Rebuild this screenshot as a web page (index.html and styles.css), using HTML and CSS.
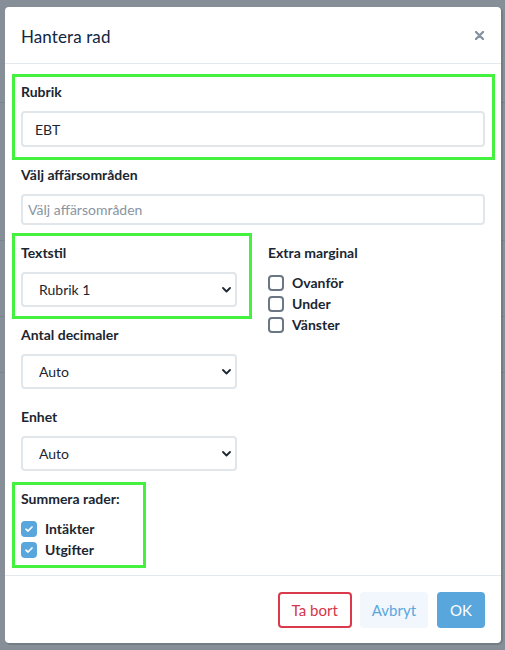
FILE: index.html
```html
<!DOCTYPE html>
<html lang="sv">

<head>
    <meta charset="UTF-8">
    <meta name="viewport" content="width=device-width, initial-scale=1.0">
    <title>Hantera rad</title>
    <link rel="stylesheet" href="styles.css">
</head>

<body>
    <div class="sida">
        <div class="sida-linje linje-1"></div>
        <div class="sida-linje linje-2"></div>
        <div class="sida-linje linje-3"></div>
        <div class="sida-linje linje-4"></div>
        <p class="sida-period">r: 21-01-01 – 21-12-31</p>
    </div>

    <div class="modal">
        <div class="modal-huvud">
            <h2>Hantera rad</h2>
            <button type="button" class="stang" aria-label="Stäng">
                <svg width="9" height="9" viewBox="0 0 9 9">
                    <path d="M1 1 L8 8 M8 1 L1 8" stroke="#8593a0" stroke-width="2.4" stroke-linecap="round" />
                </svg>
            </button>
        </div>

        <form class="modal-innehall">
            <div class="falt markerad markerad-rubrik">
                <label for="rubrik">Rubrik</label>
                <input type="text" id="rubrik" class="kontroll" value="EBT">
            </div>

            <div class="falt">
                <label for="omraden">Välj affärsområden</label>
                <input type="text" id="omraden" class="kontroll kontroll-liten" placeholder="Välj affärsområden">
            </div>

            <div class="kolumner">
                <div>
                    <div class="falt markerad markerad-stil">
                        <label for="textstil">Textstil</label>
                        <div class="valj">
                            <select id="textstil" class="kontroll kontroll-valj">
                                <option>Rubrik 1</option>
                                <option>Rubrik 2</option>
                                <option>Normal</option>
                            </select>
                            <svg class="pil" width="9" height="6" viewBox="0 0 9 6">
                                <path d="M1 1 L4.5 4.5 L8 1" fill="none" stroke="#1d2834" stroke-width="1.8" stroke-linecap="round" stroke-linejoin="round" />
                            </svg>
                        </div>
                    </div>

                    <div class="falt">
                        <label for="decimaler">Antal decimaler</label>
                        <div class="valj">
                            <select id="decimaler" class="kontroll kontroll-valj">
                                <option>Auto</option>
                                <option>0</option>
                                <option>1</option>
                                <option>2</option>
                            </select>
                            <svg class="pil" width="9" height="6" viewBox="0 0 9 6">
                                <path d="M1 1 L4.5 4.5 L8 1" fill="none" stroke="#1d2834" stroke-width="1.8" stroke-linecap="round" stroke-linejoin="round" />
                            </svg>
                        </div>
                    </div>

                    <div class="falt">
                        <label for="enhet">Enhet</label>
                        <div class="valj">
                            <select id="enhet" class="kontroll kontroll-valj">
                                <option>Auto</option>
                                <option>kr</option>
                                <option>tkr</option>
                            </select>
                            <svg class="pil" width="9" height="6" viewBox="0 0 9 6">
                                <path d="M1 1 L4.5 4.5 L8 1" fill="none" stroke="#1d2834" stroke-width="1.8" stroke-linecap="round" stroke-linejoin="round" />
                            </svg>
                        </div>
                    </div>

                    <div class="falt markerad markerad-summa">
                        <label>Summera rader:</label>
                        <div class="rutor">
                            <label class="ruta"><span class="box box-ikryssad">
                                <svg width="10" height="8" viewBox="0 0 10 8">
                                    <path d="M2 4.2 L4 6 L8 2" fill="none" stroke="#ffffff" stroke-width="1.7" stroke-linecap="round" stroke-linejoin="round" />
                                </svg></span>Intäkter</label>
                            <label class="ruta"><span class="box box-ikryssad">
                                <svg width="10" height="8" viewBox="0 0 10 8">
                                    <path d="M2 4.2 L4 6 L8 2" fill="none" stroke="#ffffff" stroke-width="1.7" stroke-linecap="round" stroke-linejoin="round" />
                                </svg></span>Utgifter</label>
                        </div>
                    </div>
                </div>

                <div>
                    <div class="falt">
                        <label>Extra marginal</label>
                        <div class="rutor">
                            <label class="ruta"><span class="box"></span>Ovanför</label>
                            <label class="ruta"><span class="box"></span>Under</label>
                            <label class="ruta"><span class="box"></span>Vänster</label>
                        </div>
                    </div>
                </div>
            </div>
        </form>

        <div class="modal-fot">
            <button type="button" class="knapp knapp-ta-bort">Ta bort</button>
            <button type="button" class="knapp knapp-avbryt">Avbryt</button>
            <button type="submit" class="knapp knapp-ok">OK</button>
        </div>
    </div>
</body>

</html>
```

FILE: styles.css
```css
body {
    font-family: Lato, "Noto Sans", sans-serif;
    margin: 0;
    padding: 0;
    background-color: #868f97;
    color: #1b2631;
    height: 650px;
    overflow: hidden;
    position: relative;
}

/* sidan bakom dialogen */
.sida {
    height: 650px;
    position: relative;
}

.sida-linje {
    height: 1px;
    background-color: #7a848c;
}

.linje-1 {
    margin-top: 102px;
}

.linje-2 {
    margin-top: 137px;
}

.linje-3 {
    margin-top: 75px;
}

.linje-4 {
    margin-top: 55px;
}

.sida-period {
    position: absolute;
    left: 0;
    top: 641px;
    margin: 0;
    font-size: 14px;
    line-height: 16px;
    color: #333b42;
}

/* dialogen */
.modal {
    position: absolute;
    top: 7px;
    left: 5px;
    width: 496px;
    height: 636px;
    background-color: #ffffff;
    border-radius: 4px;
    box-shadow: 1px 1px 0 1px rgba(0, 0, 0, 0.12);
    display: flex;
    flex-direction: column;
}

.modal-huvud {
    height: 56px;
    display: flex;
    align-items: center;
    justify-content: space-between;
    padding: 0 17px 0 16px;
    border-bottom: 1px solid #e3e8ec;
}

.modal-huvud h2 {
    margin: 0;
    font-size: 17px;
    font-weight: normal;
    color: #12263f;
    padding-top: 2px;
    letter-spacing: 0.1px;
}

.stang {
    background: none;
    border: none;
    padding: 0;
    width: 9px;
    height: 9px;
    display: flex;
    cursor: pointer;
}

.modal-innehall {
    flex: 1;
    padding: 19px 16px 0 16px;
}

.falt {
    position: relative;
    margin-bottom: 19px;
}

.falt > label {
    display: block;
    font-size: 14px;
    line-height: 18px;
    font-weight: bold;
    margin-bottom: 10px;
    padding-top: 1px;
    margin-top: -1px;
}

.kolumner {
    display: grid;
    grid-template-columns: 216px 1fr;
    gap: 31px;
}

.kolumner .falt:last-child {
    margin-bottom: 0;
}

/* gröna markeringar ovanpå fälten */
.markerad::before {
    content: "";
    position: absolute;
    border: 3px solid #43f13e;
    box-sizing: border-box;
    pointer-events: none;
}

.markerad-rubrik::before {
    top: -8px;
    right: -10px;
    bottom: -13px;
    left: -9px;
}

.markerad-stil::before {
    top: -10px;
    right: -15px;
    bottom: -12px;
    left: -9px;
}

.markerad-summa::before {
    top: -7px;
    bottom: -8px;
    left: -9px;
    width: 134px;
}

.kontroll {
    display: block;
    width: 100%;
    height: 36px;
    border: 2px solid #e1e6ea;
    border-radius: 4px;
    box-sizing: border-box;
    font-family: inherit;
    font-size: 14px;
    color: #1b2631;
    padding: 0 12px;
    background-color: #ffffff;
    outline: none;
}

.kontroll-liten {
    height: 31px;
    padding: 0 5px;
}

.kontroll-liten::placeholder {
    color: #8995a1;
}

.valj {
    position: relative;
}

.kontroll-valj {
    height: 35px;
    padding: 0 16px;
    appearance: none;
    -webkit-appearance: none;
}

.pil {
    position: absolute;
    right: 6px;
    top: 15px;
    pointer-events: none;
}

.rutor {
    display: flex;
    flex-direction: column;
}

.ruta {
    display: flex;
    align-items: center;
    height: 21px;
    font-size: 14px;
    font-weight: bold;
}

.box {
    width: 16px;
    height: 16px;
    border: 2px solid #6b7684;
    border-radius: 4px;
    box-sizing: border-box;
    margin-right: 8px;
    display: flex;
    align-items: center;
    justify-content: center;
}

.box-ikryssad {
    border: none;
    background-color: #58a6dc;
}

.modal-fot {
    border-top: 1px solid #e3e8ec;
    display: flex;
    justify-content: flex-end;
    gap: 8px;
    padding: 16px 16px 15px;
}

.knapp {
    height: 36px;
    padding: 0 13px;
    border: none;
    border-radius: 4px;
    font-family: inherit;
    font-size: 15px;
    cursor: pointer;
}

.knapp-ta-bort {
    background-color: #ffffff;
    border: 2px solid #d93a4c;
    color: #d63447;
    padding: 0 12px;
}

.knapp-avbryt {
    background-color: #f1f7fc;
    color: #5aa7dc;
    padding: 0 12px;
}

.knapp-ok {
    background-color: #58a6dc;
    color: #ffffff;
    padding: 0 13px;
    margin-left: 1px;
}
```
